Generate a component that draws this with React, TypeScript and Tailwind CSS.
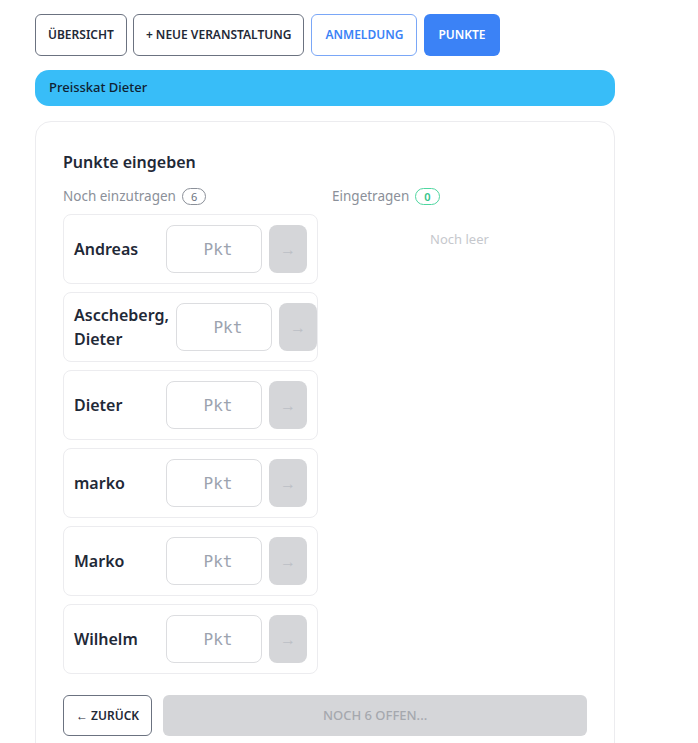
import { useState } from "react"

const players = ["Andreas", "Asccheberg, Dieter", "Dieter", "marko", "Marko", "Wilhelm"]

function PlayerRow({ name }: { name: string }) {
  const [value, setValue] = useState("")
  return (
    <div className="flex h-[70px] items-center gap-[7px] rounded-lg border border-[#ececef] bg-white px-[10px]">
      <div className="flex-1 text-[16px] font-semibold leading-[24px] text-[#1f2937]">{name}</div>
      <input
        value={value}
        onChange={(e) => setValue(e.target.value)}
        placeholder="Pkt"
        className="h-12 w-24 shrink-0 rounded-lg border border-[#dcdde0] bg-white pl-2 text-center font-['DejaVu_Sans_Mono',monospace] text-[16px] text-[#1f2937] placeholder:text-[#9ca3af] outline-none"
      />
      <button className="flex h-12 w-[38px] shrink-0 items-center justify-center rounded-lg bg-[#d5d6d9] text-[16px] text-[#bcbfc5]">
        →
      </button>
    </div>
  )
}

export default function App() {
  const tabs = ["ÜBERSICHT", "+ NEUE VERANSTALTUNG"]
  return (
    <div className="min-h-[743px] bg-white px-[35px] pt-[14px] font-['Noto_Sans',sans-serif] text-[#1f2937]">
      <div className="flex gap-[6px]">
        {tabs.map((t) => (
          <button
            key={t}
            className="h-[42px] rounded-md border border-[#6b7280] bg-white px-[12px] text-[12px] font-semibold text-[#1f2937]"
          >
            {t}
          </button>
        ))}
        <button className="ml-px h-[42px] rounded-md border border-[#7aa7f7] bg-white px-[13px] text-[12px] font-semibold text-[#3b82f6]">
          ANMELDUNG
        </button>
        <button className="ml-px h-[42px] rounded-md bg-[#3b82f6] px-[14px] text-[12px] font-semibold text-white">
          PUNKTE
        </button>
      </div>

      <div className="mt-[14px] flex h-9 w-[580px] items-center rounded-[14px] bg-[#38bdf8] px-[14px] text-[13px] font-medium text-[#0f2233]">
        Preisskat Dieter
      </div>

      <div className="mt-[15px] w-[580px] rounded-2xl border border-[#ececef] bg-white px-[27px] pb-6 pt-[28px]">
        <h2 className="text-[16px] font-semibold leading-6">Punkte eingeben</h2>

        <div className="mt-[12px] grid grid-cols-2 gap-[14px]">
          <div>
            <div className="mb-2 flex items-center gap-[6px] text-[13.5px] text-[#8b9099]">
              Noch einzutragen
              <span className="flex h-[17px] items-center rounded-full border border-[#8b9099] px-[8px] text-[11px] leading-none text-[#6b7280]">
                6
              </span>
            </div>
            <div className="flex flex-col gap-2">
              {players.map((p) => (
                <PlayerRow key={p} name={p} />
              ))}
            </div>
          </div>

          <div>
            <div className="flex items-center gap-[6px] text-[13.5px] text-[#8b9099]">
              Eingetragen
              <span className="flex h-[17px] items-center rounded-full border border-[#4fd6a0] px-[8px] text-[11px] font-semibold leading-none text-[#34c58a]">
                0
              </span>
            </div>
            <div className="mt-[24px] text-center text-[13px] text-[#c6c8cd]">Noch leer</div>
          </div>
        </div>

        <div className="mt-[21px] flex gap-[11px]">
          <button className="h-[41px] shrink-0 rounded-md border border-[#6b7280] bg-white px-[12px] text-[12px] font-semibold text-[#1f2937]">
            ← ZURÜCK
          </button>
          <button className="h-[41px] flex-1 rounded-md bg-[#d5d6d9] text-[13px] font-medium text-[#a5a8ae]">
            NOCH 6 OFFEN...
          </button>
        </div>
      </div>
    </div>
  )
}
